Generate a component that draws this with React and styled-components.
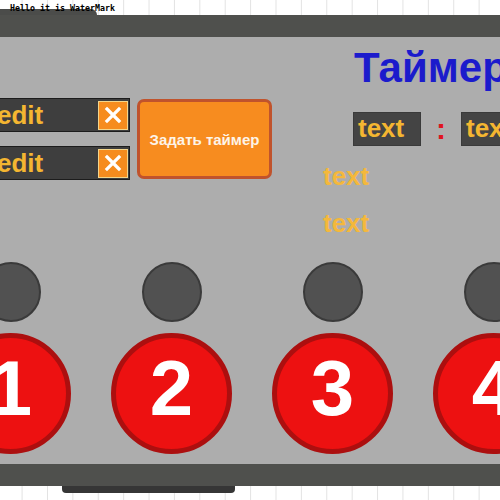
import React from 'react';
import styled, { createGlobalStyle } from 'styled-components';

const GlobalStyle = createGlobalStyle`
  html, body {
    margin: 0;
    padding: 0;
    width: 500px;
    height: 500px;
    overflow: hidden;
    background-color: #ffffff;
    background-image: linear-gradient(to right, #e2e2e2 1px, transparent 1px);
    background-size: 25.4px 100%;
    background-position: 21.6px 0;
    font-family: "Liberation Sans", Arial, sans-serif;
  }
`;

const Page = styled.div`
  position: relative;
  width: 500px;
  height: 500px;
  overflow: hidden;
`;

const WaterMark = styled.div`
  position: absolute;
  top: 4px;
  left: 10px;
  z-index: 2;
  font-family: "DejaVu Sans Mono", monospace;
  font-size: 8.3px;
  font-weight: bold;
  line-height: 1;
  color: #000;
  white-space: nowrap;
`;

const Device = styled.div`
  display: flex;
  flex-direction: column;
  padding-top: 9px;
`;

const TopTab = styled.div`
  width: 97px;
  height: 6px;
  background: #4b4c4a;
  border-top-right-radius: 6px;
`;

const Bar = styled.div`
  height: 22px;
  background: #4f504d;
`;

const BottomTab = styled.div`
  margin-left: 62px;
  width: 173px;
  height: 7px;
  background: #363636;
  border-bottom-left-radius: 4px;
  border-bottom-right-radius: 4px;
`;

const Panel = styled.div`
  height: 427px;
  background: #adadad;
  overflow: hidden;
  display: flex;
  flex-direction: column;
`;

const TopSection = styled.div`
  display: flex;
  align-items: flex-start;
  padding-top: 10px;
  margin-left: -20px;
`;

const Controls = styled.div`
  display: flex;
  align-items: flex-start;
  gap: 7px;
  margin-top: 51px;
`;

const EditColumn = styled.div`
  display: flex;
  flex-direction: column;
  gap: 14px;
`;

const EditBox = styled.div`
  box-sizing: border-box;
  width: 150px;
  height: 34px;
  background: #3e3e3e;
  border: 1px solid #1c1c1c;
  display: flex;
  align-items: center;
  justify-content: space-between;
  padding: 0 1px 0 16px;
`;

const EditText = styled.span`
  color: #f4b631;
  font-size: 26px;
  font-weight: bold;
  line-height: 1;
`;

const ClearButton = styled.div`
  box-sizing: border-box;
  width: 30px;
  height: 29px;
  background: #f68c1e;
  border: 1px solid #f3d68c;
  display: flex;
  align-items: center;
  justify-content: center;
`;

const SetButton = styled.div`
  box-sizing: border-box;
  width: 135px;
  height: 80px;
  margin-top: 1px;
  background: #f78c1f;
  border: 3px solid #c0532c;
  border-radius: 7px;
  display: flex;
  align-items: center;
  justify-content: center;
  color: #fdf4e8;
  font-size: 15px;
  font-weight: bold;
  white-space: nowrap;
`;

const TimerBlock = styled.div`
  display: flex;
  flex-direction: column;
  align-items: flex-start;
  margin-left: 51px;
`;

const Title = styled.div`
  margin-left: 31px;
  color: #1b1bcc;
  font-size: 42px;
  font-weight: bold;
  line-height: 1;
  white-space: nowrap;
`;

const TimeRow = styled.div`
  display: flex;
  align-items: center;
  gap: 15px;
  margin: 23px 0 0 30px;
`;

const TimeBox = styled.div`
  box-sizing: border-box;
  width: 68px;
  height: 34px;
  padding-left: 4px;
  background: #444444;
  border: 1px solid #3a3a3a;
  color: #f4b631;
  font-size: 26px;
  font-weight: bold;
  line-height: 30px;
  white-space: nowrap;
  overflow: hidden;
  flex-shrink: 0;
`;

const Colon = styled.span`
  width: 10px;
  text-align: center;
  color: #e0141e;
  font-size: 30px;
  font-weight: bold;
  line-height: 1;
`;

const Label = styled.div`
  margin-top: ${p => p.$gap}px;
  color: #f4b83c;
  font-size: 26px;
  font-weight: bold;
  line-height: 1;
`;

const ButtonsRow = styled.div`
  display: flex;
  margin: 26px 0 0 -70px;
`;

const ButtonColumn = styled.div`
  width: 161px;
  flex-shrink: 0;
  display: flex;
  flex-direction: column;
  align-items: center;
  gap: 11px;
`;

const Lamp = styled.div`
  box-sizing: border-box;
  width: 60px;
  height: 60px;
  border-radius: 50%;
  background: #515151;
  border: 2px solid #3a3a3a;
`;

const NumberButton = styled.div`
  box-sizing: border-box;
  width: 121px;
  height: 121px;
  border-radius: 50%;
  background: #ed1111;
  border: 5px solid #ac0f0f;
  display: flex;
  align-items: center;
  justify-content: center;
  color: #ffffff;
  font-size: 78px;
  font-weight: bold;
  line-height: 1;
  padding-bottom: 11px;
`;

const CloseIcon = () => (
  <svg width="18" height="18" viewBox="0 0 18 18">
    <path d="M3 3 L15 15 M15 3 L3 15" stroke="#ffffff" strokeWidth="3.2" strokeLinecap="square" />
  </svg>
);

const EditField = () => (
  <EditBox>
    <EditText>edit</EditText>
    <ClearButton>
      <CloseIcon />
    </ClearButton>
  </EditBox>
);

export default function App() {
  return (
    <>
      <GlobalStyle />
      <Page>
        <WaterMark>Hello it is WaterMark</WaterMark>
        <Device>
          <TopTab />
          <Bar />
          <Panel>
            <TopSection>
              <Controls>
                <EditColumn>
                  <EditField />
                  <EditField />
                </EditColumn>
                <SetButton>Задать таймер</SetButton>
              </Controls>
              <TimerBlock>
                <Title>Таймер</Title>
                <TimeRow>
                  <TimeBox>text</TimeBox>
                  <Colon>:</Colon>
                  <TimeBox>text</TimeBox>
                </TimeRow>
                <Label $gap={17}>text</Label>
                <Label $gap={21}>text</Label>
              </TimerBlock>
            </TopSection>
            <ButtonsRow>
              {[1, 2, 3, 4].map(n => (
                <ButtonColumn key={n}>
                  <Lamp />
                  <NumberButton>{n}</NumberButton>
                </ButtonColumn>
              ))}
            </ButtonsRow>
          </Panel>
          <Bar />
          <BottomTab />
        </Device>
      </Page>
    </>
  );
}
